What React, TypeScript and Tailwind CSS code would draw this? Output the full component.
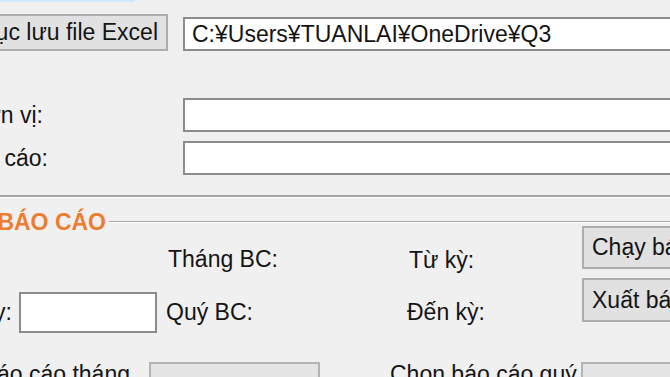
import React from "react";

export default function App() {
  return (
    <div
      className="w-[670px] h-[377px] overflow-hidden bg-[#f0f0f0] text-[#141414] text-[23px] leading-[25px] flex flex-col"
      style={{ fontFamily: '"Liberation Sans", Arial, sans-serif' }}
    >
      <div className="h-[2px] w-[135px] shrink-0 bg-[#cfe8fb]" />

      {/* Row 1: folder button + path */}
      <div className="mt-[12px] flex items-start h-[37px] shrink-0">
        <button className="-ml-[140px] w-[308px] h-[37px] shrink-0 bg-[#e1e1e1] border-2 border-[#adadad] flex items-center justify-end pr-[8px] whitespace-nowrap overflow-hidden">
          Chọn thư mục lưu file Excel
        </button>
        <div className="ml-[15px] mt-[3px] h-[34px] w-[520px] shrink-0 bg-white border-2 border-[#8c8c8c] flex items-center pl-[7px] whitespace-nowrap">
          C:¥Users¥TUANLAI¥OneDrive¥Q3
        </div>
      </div>

      {/* Row 2 */}
      <div className="mt-[47px] flex items-center h-[34px] shrink-0">
        <div className="-ml-[100px] w-[143px] shrink-0 flex justify-end whitespace-nowrap">Tên đơn vị:</div>
        <div className="ml-[140px] h-[34px] w-[520px] shrink-0 bg-white border-2 border-[#8c8c8c]" />
      </div>

      {/* Row 3 */}
      <div className="mt-[9px] flex items-center h-[34px] shrink-0">
        <div className="-ml-[100px] w-[148px] shrink-0 flex justify-end whitespace-nowrap">Tên báo cáo:</div>
        <div className="ml-[135px] h-[34px] w-[520px] shrink-0 bg-white border-2 border-[#8c8c8c]" />
      </div>

      {/* Separator */}
      <div className="mt-[20px] h-[2px] shrink-0 bg-[#a3a3a3]" />
      <div className="h-[1px] shrink-0 bg-white" />

      {/* Group header */}
      <div className="mt-[12px] flex items-center h-[24px] shrink-0">
        <div className="-ml-[100px] w-[206px] shrink-0 flex justify-end whitespace-nowrap font-bold text-[#ed7d31] text-[23px]">
          CHẠY BÁO CÁO
        </div>
        <div className="ml-[3px] flex-1 flex flex-col">
          <div className="h-[1px] bg-[#a8a8a8]" />
          <div className="h-[1px] bg-white" />
        </div>
      </div>

      {/* Row A */}
      <div className="-mt-[8px] flex items-start h-[43px] shrink-0">
        <div className="w-[168px] shrink-0" />
        <div className="w-[241px] shrink-0 mt-[21px] whitespace-nowrap">Tháng BC:</div>
        <div className="w-[173px] shrink-0 mt-[22px] whitespace-nowrap">Từ kỳ:</div>
        <button className="w-[160px] h-[43px] shrink-0 bg-[#e1e1e1] border-2 border-[#adadad] flex items-center justify-start pl-[8px] whitespace-nowrap">
          Chạy báo cáo
        </button>
      </div>

      {/* Row B */}
      <div className="mt-[9px] flex items-start h-[55px] shrink-0">
        <div className="-ml-[100px] w-[112px] shrink-0 mt-[22px] flex justify-end whitespace-nowrap">Ngày:</div>
        <div className="ml-[7px] mt-[14px] h-[41px] w-[138px] shrink-0 bg-white border-2 border-[#8c8c8c]" />
        <div className="ml-[9px] w-[241px] shrink-0 mt-[22px] whitespace-nowrap">Quý BC:</div>
        <div className="w-[175px] shrink-0 mt-[22px] whitespace-nowrap">Đến kỳ:</div>
        <button className="w-[160px] h-[44px] shrink-0 bg-[#e1e1e1] border-2 border-[#adadad] flex items-center justify-start pl-[8px] whitespace-nowrap">
          Xuất báo cáo
        </button>
      </div>

      {/* Row C */}
      <div className="mt-[29px] flex items-start h-[30px] shrink-0">
        <div className="-ml-[100px] w-[230px] shrink-0 flex justify-end whitespace-nowrap">Chọn báo cáo tháng</div>
        <div className="ml-[19px] h-[30px] w-[171px] shrink-0 bg-[#e5e5e5] border-2 border-[#b4b4b4]" />
        <div className="ml-[70px] w-[191px] shrink-0 whitespace-nowrap">Chọn báo cáo quý</div>
        <div className="h-[30px] w-[120px] shrink-0 bg-[#e5e5e5] border-2 border-[#b4b4b4]" />
      </div>
    </div>
  );
}
